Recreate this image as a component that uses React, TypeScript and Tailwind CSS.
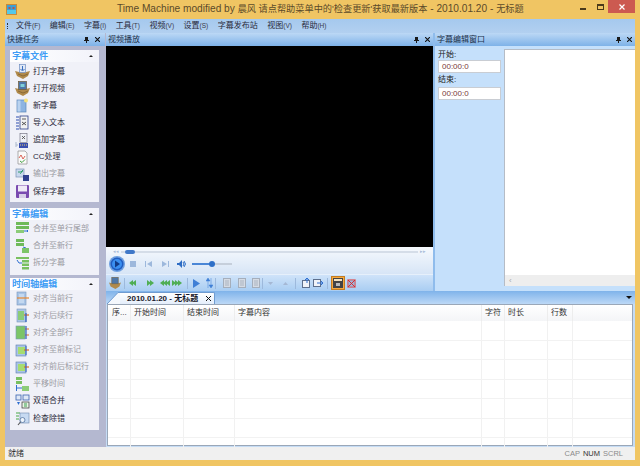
import type { ReactNode } from "react";

const cjk = { fontFamily: '"Liberation Sans", "Noto Sans CJK SC", sans-serif' };

function PanelHeader({ title, pad = "pr-[5px]" }: { title: string; pad?: string }) {
  return (
    <div className={`h-[13px] shrink-0 flex items-center justify-between pl-[2px] ${pad} bg-gradient-to-b from-[#bcd8f5] to-[#7eb2e8] text-[8px] leading-none text-[#20304a]`}>
      <span>{title}</span>
      <span className="flex items-center gap-[6px]">
        <svg width="5" height="6" viewBox="0 0 5 6">
          <path d="M1 0h3v3h1v1H3v2H2V4H0V3h1z" fill="#1a1a1a" />
        </svg>
        <svg width="5" height="5" viewBox="0 0 5 5">
          <path d="M0 0l5 5M5 0L0 5" stroke="#111" strokeWidth="1.1" />
        </svg>
      </span>
    </div>
  );
}

function SideIcon({ kind }: { kind: string }) {
  const s = { width: 15, height: 15, viewBox: "0 0 15 15" };
  switch (kind) {
    case "openSub":
      return (
        <svg {...s}>
          <path d="M0 7l4 1 7 0 4-1-2 5-5 3-6-3z" fill="#b08a4c" />
          <path d="M3 10l5 2 5-2" stroke="#7a5c2c" fill="none" strokeWidth="0.7" />
          <rect x="4.500" y="0.500" width="6" height="8" fill="#dfe8f6" stroke="#6f8fc0" strokeWidth="0.7" />
          <path d="M7.500 2v4M5.500 5l2 2 2-2" stroke="#3a6fc0" fill="none" />
        </svg>
      );
    case "openVideo":
      return (
        <svg {...s}>
          <path d="M0 7l4 1 7 0 4-1-2 5-5 3-6-3z" fill="#b08a4c" />
          <path d="M3 10l5 2 5-2" stroke="#7a5c2c" fill="none" strokeWidth="0.7" />
          <rect x="3.500" y="0.500" width="8" height="8" fill="#4f78a8" stroke="#6d5a3a" strokeWidth="0.7" />
          <rect x="5.500" y="3" width="4" height="3" fill="#7fd0d8" />
        </svg>
      );
    case "newSub":
      return (
        <svg {...s}>
          <rect x="2" y="2" width="9" height="12" fill="#8db4e2" stroke="#5d86b8" strokeWidth="0.7" />
          <rect x="2.500" y="2.500" width="3" height="11" fill="#b9d2ef" />
          <circle cx="11" cy="2.500" r="2" fill="#f6e27a" />
        </svg>
      );
    case "import":
      return (
        <svg {...s}>
          <path d="M1 2h3M1 5h3M1 8h3M1 11h3M1 14h3" stroke="#2f4fb0" />
          <rect x="5" y="1" width="8" height="13" fill="#f2f2f2" stroke="#2b3f88" strokeWidth="0.8" />
          <path d="M7 4h4M7 7l4 3M11 7l-4 3" stroke="#333" strokeWidth="0.8" />
        </svg>
      );
    case "append":
      return (
        <svg {...s}>
          <rect x="5" y="0.500" width="7" height="9" fill="#eef0f6" stroke="#667" strokeWidth="0.6" />
          <path d="M7 3l3 3M10 3L7 6" stroke="#444" strokeWidth="0.8" />
          <path d="M1 12h2M1 9v5" stroke="#a9b7cc" />
          <path d="M4 10h9v5H4z" fill="#3a4fb0" />
          <path d="M5 12h7" stroke="#e8d070" strokeDasharray="1 1" />
        </svg>
      );
    case "cc":
      return (
        <svg {...s}>
          <path d="M3 1h7l2 2v11H3z" fill="#fafafa" stroke="#999" strokeWidth="0.8" />
          <path d="M4 8l2-3 2 4 2-3" stroke="#d04030" fill="none" strokeWidth="0.8" />
          <path d="M5 11l2 1.500 3-3" stroke="#40a040" fill="none" />
        </svg>
      );
    case "export":
      return (
        <svg {...s}>
          <rect x="1" y="2" width="8" height="8" fill="#c9d9ee" stroke="#7b93b5" strokeWidth="0.7" />
          <path d="M3 5h3l2-2" stroke="#2f9a6a" fill="none" />
          <rect x="8" y="8" width="6" height="6" fill="#30418f" />
          <path d="M5 7l3-3" stroke="#57b08a" />
        </svg>
      );
    case "save":
      return (
        <svg {...s}>
          <rect x="1" y="1" width="13" height="13" rx="1" fill="#7a4bb0" />
          <rect x="3" y="1.500" width="9" height="6" fill="#efeaf7" />
          <rect x="4" y="10" width="7" height="4" fill="#d8d0e8" />
        </svg>
      );
    case "mergeTail":
      return (
        <svg {...s}>
          <rect x="1" y="1" width="13" height="3" fill="#6fba5a" />
          <rect x="1" y="5" width="13" height="3" fill="#6fba5a" />
          <rect x="1" y="9" width="8" height="3" fill="#8ccc78" />
          <path d="M9 10h4l-1-1m1 1l-1 1" stroke="#2f6fd0" fill="none" />
        </svg>
      );
    case "mergeNew":
      return (
        <svg {...s}>
          <rect x="1" y="1" width="8" height="3" fill="#6fba5a" />
          <rect x="1" y="5" width="8" height="3" fill="#6fba5a" />
          <path d="M8 9l3 1" stroke="#2f6fd0" />
          <rect x="7" y="10" width="7" height="5" fill="#7cc568" />
        </svg>
      );
    case "split":
      return (
        <svg {...s}>
          <rect x="1" y="2" width="13" height="2" fill="#79c060" />
          <path d="M2 5l2 3h3" stroke="#2f6fd0" fill="none" />
          <rect x="7" y="5" width="7" height="2.500" fill="#79c060" />
          <rect x="7" y="8.500" width="7" height="2.500" fill="#79c060" />
          <rect x="7" y="12" width="7" height="2.500" fill="#79c060" />
        </svg>
      );
    case "alignA":
      return (
        <svg {...s}>
          <rect x="2" y="1" width="9" height="13" fill="#a8c4e6" stroke="#7996bd" strokeWidth="0.6" />
          <rect x="4" y="3" width="5" height="9" fill="#c3d8f0" />
          <path d="M2 7h12" stroke="#e8862c" strokeWidth="1.200" />
        </svg>
      );
    case "alignB":
      return (
        <svg {...s}>
          <rect x="2" y="1" width="9" height="13" fill="#a8c4e6" stroke="#7996bd" strokeWidth="0.6" />
          <rect x="3" y="3" width="6" height="9" fill="#8ccc78" />
          <path d="M9 7h5" stroke="#e07020" strokeWidth="1.200" />
          <path d="M11 5v9" stroke="#2f5fc0" strokeWidth="1.200" />
        </svg>
      );
    case "alignC":
      return (
        <svg {...s}>
          <rect x="1" y="1" width="9" height="13" fill="#7cc568" stroke="#7996bd" strokeWidth="0.6" />
          <path d="M10 4h4M10 10h4" stroke="#e07020" strokeWidth="1.200" />
          <path d="M11 1v13" stroke="#2f5fc0" strokeWidth="1.200" />
        </svg>
      );
    case "alignD":
      return (
        <svg {...s}>
          <rect x="1" y="2" width="10" height="11" fill="#a8c4e6" stroke="#5d7cae" strokeWidth="0.6" />
          <rect x="3" y="4" width="7" height="7" fill="#a6dc70" />
          <path d="M9 7h5" stroke="#e07020" strokeWidth="1.200" />
          <path d="M11 3v9" stroke="#2f5fc0" strokeWidth="1" />
        </svg>
      );
    case "shift":
      return (
        <svg {...s}>
          <rect x="1" y="0" width="6" height="3" fill="#79c060" />
          <rect x="1" y="4" width="6" height="3" fill="#79c060" />
          <path d="M1.500 8v6M2 11h5" stroke="#2f6fd0" />
          <rect x="7" y="9" width="7" height="5" fill="#8ccc78" />
        </svg>
      );
    case "dual":
      return (
        <svg {...s}>
          <rect x="1" y="1" width="5" height="5" fill="#dfe8f6" stroke="#3a63b0" strokeWidth="0.8" />
          <rect x="8" y="1" width="6" height="5" fill="#dfe8f6" stroke="#3a63b0" strokeWidth="0.8" />
          <rect x="7" y="8" width="7" height="6" fill="#e8f4e4" stroke="#333" strokeWidth="0.7" />
          <path d="M9 10h3M9 12h3" stroke="#3aa050" />
          <path d="M2 8h3l-1.500 3z" fill="#2f6fd0" />
        </svg>
      );
    default:
      return (
        <svg {...s}>
          <path d="M1 2h4M1 5h3M1 8h3" stroke="#48a848" />
          <rect x="5" y="2" width="9" height="10" fill="#c7daf2" stroke="#7089ad" strokeWidth="0.6" />
          <circle cx="7.500" cy="9" r="2.500" fill="#eef4fb" stroke="#55749e" strokeWidth="0.8" />
          <path d="M5.500 11L3 14" stroke="#555" strokeWidth="1.100" />
        </svg>
      );
  }
}

function TaskGroup({
  title,
  items,
  bottom,
  list = "pb-[3px]",
}: {
  title: string;
  items: { icon: string; label: string; on?: boolean }[];
  bottom: string;
  list?: string;
}) {
  return (
    <div className={bottom}>
      <div className="h-[12px] flex items-center justify-between pl-[2px] pr-[6px] bg-gradient-to-r from-white to-[#f2f3fa] text-[9px] leading-none text-[#3b9bf5]">
        <span className="[text-shadow:0.3px_0_0_#3b9bf5]">{title}</span>
        <span className="w-0 h-0 border-x-[2px] border-x-transparent border-b-[2px] border-b-[#222]" />
      </div>
      <div className={`bg-[#f0f1f8] pl-[5px] ${list}`}>
        {items.map((it) => (
          <div key={it.label} className="h-[17.150px] flex items-center gap-[3px]">
            <SideIcon kind={it.icon} />
            <span className={`text-[8px] leading-none ${it.on ? "text-[#2a2a3a]" : "text-[#9a9aa2]"}`}>{it.label}</span>
          </div>
        ))}
      </div>
    </div>
  );
}

function Player() {
  return (
    <div className="h-[27px] bg-gradient-to-b from-[#f6f9fd] to-[#d7e5f6] shrink-0">
      <div className="h-[8px] flex items-center px-[7px] gap-[2px] pt-[1px]">
        <span className="text-[5px] leading-none text-[#a8bcd8]">◂◂</span>
        <div className="relative flex-1 h-[2px] bg-[#d5dde8]">
          <span className="absolute left-[4px] -top-[1px] w-[10px] h-[4px] rounded-full bg-[#3f78c8]" />
        </div>
        <span className="text-[5px] leading-none text-[#a8bcd8]">▸▸</span>
      </div>
      <div className="flex items-center h-[18px] pl-[3px]">
        <svg width="16" height="16" viewBox="0 0 16 16">
          <circle cx="8" cy="8" r="8" fill="#6d9fe0" />
          <circle cx="8" cy="8" r="6.500" fill="#1f5cc0" />
          <circle cx="8" cy="8" r="5" fill="#3b8ff0" />
          <path d="M6 4.500l5 3.500-5 3.500z" fill="#123a86" />
        </svg>
        <span className="ml-[5px] w-[6px] h-[6px] bg-[#9db8dc]" />
        <svg className="ml-[9px]" width="7" height="6" viewBox="0 0 7 6">
          <path d="M0 0h1v6H0zM7 0v6L2 3z" fill="#9db8dc" />
        </svg>
        <svg className="ml-[10px]" width="7" height="6" viewBox="0 0 7 6">
          <path d="M6 0h1v6H6zM0 0v6l5-3z" fill="#9db8dc" />
        </svg>
        <svg className="ml-[8px]" width="9" height="8" viewBox="0 0 9 8">
          <path d="M0 3h2l3-3v8L2 5H0z" fill="#2d6cc4" />
          <path d="M6 2q2 2 0 4M7 1q3 3 0 6" stroke="#2d6cc4" fill="none" />
        </svg>
        <div className="relative ml-[6px] w-[40px] h-[2px] bg-gradient-to-r from-[#4a86d6] from-50% to-[#c6cfdb] to-50%">
          <span className="absolute left-[17px] -top-[2px] w-[6px] h-[6px] rounded-full bg-[#2f70c8]" />
        </div>
      </div>
    </div>
  );
}

function Gap({ className, children }: { className: string; children: ReactNode }) {
  return <span className={`flex shrink-0 ${className}`}>{children}</span>;
}

function Sep({ className }: { className: string }) {
  return <span className={`w-px h-[11px] shrink-0 bg-[#9db9dc] ${className}`} />;
}

function Arrow({ dir, color, n = 2 }: { dir: "l" | "r"; color: string; n?: number }) {
  const cnt = Array.from({ length: n }, (_, i) => i);
  const w = n * 3 + 1;
  return (
    <svg width={w} height="6" viewBox={`0 0 ${w} 6`}>
      {cnt.map((i) => (
        <path
          key={i}
          d={dir === "l" ? `M${i * 3 + 4} 0v6L${i * 3} 3z` : `M${i * 3} 0v6L${i * 3 + 4} 3z`}
          fill={color}
        />
      ))}
    </svg>
  );
}

function PageBtn() {
  return (
    <svg width="8" height="10" viewBox="0 0 8 10">
      <rect x="0.500" y="0.500" width="7" height="9" fill="#d5dbe4" stroke="#a5aebb" />
      <path d="M2 3h4M2 5h4M2 7h4" stroke="#aab3c0" />
    </svg>
  );
}

function Toolbar() {
  return (
    <div className="h-[17px] shrink-0 flex items-center pl-[3px] bg-gradient-to-b from-[#cfe3f9] to-[#a9cdf2] border-t border-[#e6f0fb]">
      <svg width="12" height="12" viewBox="0 0 15 15">
        <path d="M0 7l4 1 7 0 4-1-2 5-5 3-6-3z" fill="#b08a4c" />
        <rect x="3.500" y="0.500" width="8" height="8" fill="#4f78a8" stroke="#6d5a3a" strokeWidth="0.7" />
      </svg>
      <Sep className="ml-[3px]" />
      <Gap className="ml-[4px]"><Arrow dir="l" color="#4fae54" /></Gap>
      <Gap className="ml-[11px]"><Arrow dir="r" color="#4fae54" /></Gap>
      <Gap className="ml-[6px]"><Arrow dir="l" color="#4fae54" n={3} /></Gap>
      <Gap className="ml-[2px]"><Arrow dir="r" color="#4fae54" n={3} /></Gap>
      <Sep className="ml-[5px]" />
      <svg width="7" height="9" viewBox="0 0 7 9" className="ml-[5px]">
        <path d="M0 0l7 4.500L0 9z" fill="#3f7fd6" />
      </svg>
      <svg width="7" height="10" viewBox="0 0 7 10" className="ml-[6px]">
        <path d="M2 10V3M0 3l2-3 2 3z" stroke="#3f7fd6" fill="#3f7fd6" strokeWidth="0.5" />
        <path d="M5 0v7M3 7l2 3 2-3z" stroke="#3f7fd6" fill="#3f7fd6" strokeWidth="0.5" />
      </svg>
      <Sep className="ml-[2px]" />
      <Gap className="ml-[7px]"><PageBtn /></Gap>
      <Gap className="ml-[7px]"><PageBtn /></Gap>
      <Gap className="ml-[6px]"><PageBtn /></Gap>
      <Sep className="ml-[2px]" />
      <svg width="5" height="3" viewBox="0 0 5 3" className="ml-[5px]">
        <path d="M0 0h5L2.500 3z" fill="#a5b8d4" />
      </svg>
      <svg width="5" height="3" viewBox="0 0 5 3" className="ml-[10px]">
        <path d="M0 3h5L2.500 0z" fill="#a5b8d4" />
      </svg>
      <Sep className="ml-[7px]" />
      <svg width="8" height="10" viewBox="0 0 8 10" className="ml-[6px]">
        <rect x="0.500" y="2.500" width="7" height="7" fill="#f0f3f8" stroke="#5d6f8c" />
        <path d="M5 5V0M3 2l2-2 2 2" stroke="#2f6fd0" fill="none" />
      </svg>
      <svg width="10" height="10" viewBox="0 0 10 10" className="ml-[3px]">
        <rect x="0.500" y="1.500" width="7" height="7" fill="#f0f3f8" stroke="#5d6f8c" />
        <path d="M4 5h6M8 3l2 2-2 2" stroke="#2f6fd0" fill="none" />
      </svg>
      <Sep className="ml-[4px]" />
      <span className="ml-[3px] w-[14px] h-[14px] shrink-0 bg-[#f6a83e] border border-[#c47d20] flex items-center justify-center">
        <svg width="10" height="10" viewBox="0 0 10 10">
          <rect width="10" height="10" fill="#444" />
          <rect x="1" y="1" width="8" height="2" fill="#f3e2c0" />
          <rect x="3" y="5" width="4" height="3" fill="#bbb" />
        </svg>
      </span>
      <svg width="9" height="9" viewBox="0 0 10 10" className="ml-[2px]">
        <rect x="1" y="1" width="8" height="8" fill="#9fb8dc" stroke="#e04040" />
        <path d="M1 1l8 8M9 1l-8 8" stroke="#e02020" />
      </svg>
    </div>
  );
}

const columns = [
  { w: "w-[23px]", pad: "pl-[4px]", label: "序..." },
  { w: "w-[53px]", pad: "pl-[3px]", label: "开始时间" },
  { w: "w-[51px]", pad: "pl-[3px]", label: "结束时间" },
  { w: "w-[247px]", pad: "pl-[3px]", label: "字幕内容" },
  { w: "w-[23px]", pad: "pl-[3px]", label: "字符" },
  { w: "w-[43px]", pad: "pl-[3px]", label: "时长" },
  { w: "w-[25px]", pad: "pl-[3px]", label: "行数" },
];

const menus: [string, string][] = [
  ["文件", "(F)"],
  ["编辑", "(E)"],
  ["字幕", "(I)"],
  ["工具", "(T)"],
  ["视频", "(V)"],
  ["设置", "(S)"],
  ["字幕发布站", ""],
  ["视图", "(V)"],
  ["帮助", "(H)"],
];

export default function App() {
  return (
    <div className="w-[640px] h-[466px] overflow-hidden flex flex-col bg-[#f0c563]" style={cjk}>
      {/* Title bar */}
      <div className="h-[19px] shrink-0 flex items-center relative text-[#5b4a2a]">
        <svg className="absolute left-[6px] top-[4px]" width="11" height="11" viewBox="0 0 11 11">
          <rect x="0.500" y="0.500" width="10" height="10" fill="#3aa0d8" stroke="#c98a3a" />
          <rect x="1" y="6" width="9" height="4" fill="#54c8e8" />
          <path d="M2.500 4h2M6.500 4h2" stroke="#e04020" strokeWidth="1.500" />
        </svg>
        <span className="ml-[117px] whitespace-nowrap text-[10.150px] leading-none">
          Time Machine modified by{" "}
          <span className="text-[9.200px]">晨风 请点帮助菜单中的'检查更新'获取最新版本</span> - 2010.01.20 -{" "}
          <span className="text-[9.200px]">无标题</span>
        </span>
        <div className="absolute right-[5px] top-0 flex items-start">
          <span className="w-[6px] h-[2px] bg-[#4a3a1a] mt-[8px] mr-[11px]" />
          <span className="w-[7px] h-[6px] border border-[#4a3a1a] border-t-2 mt-[4px] mr-[4px]" />
          <span className="w-[27px] h-[13px] bg-[#cc5a50] flex items-center justify-center">
            <svg width="6" height="6" viewBox="0 0 6 6">
              <path d="M0.500 0.500l5 5M5.500 0.500l-5 5" stroke="#fff" strokeWidth="1.200" />
            </svg>
          </span>
        </div>
      </div>

      <div className="flex-1 min-h-0 flex flex-col mx-[5px] bg-[#c5dcf5]">
        {/* Menu bar */}
        <div className="h-[14px] shrink-0 flex items-center bg-gradient-to-b from-[#a5c9ee] to-[#b2d0f0] text-[8px] leading-none text-[#2a2a3a]">
          <span className="w-[1px] h-[6px] ml-[2px] mr-[8px] border-l border-dotted border-[#333]" />
          {menus.map(([m, key]) => (
            <span key={m + key} className="mr-[9.500px] whitespace-nowrap">
              {m}
              <span className="text-[6.500px] text-[#3a3a4a]">{key}</span>
            </span>
          ))}
        </div>

        <div className="flex-1 min-h-0 flex gap-[1px] bg-[#b4b8d0]">
          {/* Left task panel */}
          <div className="w-[100px] shrink-0 flex flex-col">
            <PanelHeader title="快捷任务" />
            <div className="flex-1 pl-[5px] pr-[6px] pt-[4px]">
              <TaskGroup
                title="字幕文件"
                bottom="mb-[6px]"
                list="pt-[1px] pb-[2px]"
                items={[
                  { icon: "openSub", label: "打开字幕", on: true },
                  { icon: "openVideo", label: "打开视频", on: true },
                  { icon: "newSub", label: "新字幕", on: true },
                  { icon: "import", label: "导入文本", on: true },
                  { icon: "append", label: "追加字幕", on: true },
                  { icon: "cc", label: "CC处理", on: true },
                  { icon: "export", label: "输出字幕" },
                  { icon: "save", label: "保存字幕", on: true },
                ]}
              />
              <TaskGroup
                title="字幕编辑"
                bottom="mb-[3.500px]"
                items={[
                  { icon: "mergeTail", label: "合并至单行尾部" },
                  { icon: "mergeNew", label: "合并至新行" },
                  { icon: "split", label: "拆分字幕" },
                ]}
              />
              <TaskGroup
                title="时间轴编辑"
                bottom=""
                items={[
                  { icon: "alignA", label: "对齐当前行" },
                  { icon: "alignB", label: "对齐后续行" },
                  { icon: "alignC", label: "对齐全部行" },
                  { icon: "alignD", label: "对齐至前标记" },
                  { icon: "alignD", label: "对齐前后标记行" },
                  { icon: "shift", label: "平移时间" },
                  { icon: "dual", label: "双语合并", on: true },
                  { icon: "check", label: "检查除错", on: true },
                ]}
              />
            </div>
          </div>

          {/* Right area */}
          <div className="flex-1 min-w-0 flex flex-col bg-[#c5dcf5]">
            <div className="h-[258px] shrink-0 flex gap-[2px] bg-[#8fbcec]">
              {/* Video */}
              <div className="w-[327px] shrink-0 flex flex-col">
                <PanelHeader title="视频播放" pad="pr-[3px]" />
                <div className="flex-1 min-h-0 bg-black" />
                <Player />
                <Toolbar />
              </div>
              {/* Subtitle editor */}
              <div className="flex-1 min-w-0 flex flex-col">
                <PanelHeader title="字幕编辑窗口" pad="pr-[3px]" />
                <div className="flex-1 flex bg-[#c5e0fb] pt-[3px]">
                  <div className="w-[69px] shrink-0 pl-[3px] text-[8px] leading-none text-[#222]">
                    <div className="mt-[2px] mb-[1px]">开始:</div>
                    <div className="w-[63px] h-[13px] bg-white border border-[#c9cdd3] flex items-center pl-[3px] text-[8px] text-[#7a3a3a]">00:00:0</div>
                    <div className="mt-[3px] mb-[3px]">结束:</div>
                    <div className="w-[63px] h-[13px] bg-white border border-[#c9cdd3] flex items-center pl-[3px] text-[8px] text-[#7a3a3a]">00:00:0</div>
                  </div>
                  <div className="flex-1 h-[237px] flex flex-col justify-end bg-white border-l border-t border-[#b5bcc6]">
                    <div className="h-[11px] bg-[#eeeeee] flex items-center pl-[4px] text-[8px] leading-none text-[#aaa]">‹</div>
                  </div>
                </div>
              </div>
            </div>

            {/* Tab strip */}
            <div className="h-[13px] shrink-0 flex items-end pl-[1px] bg-gradient-to-b from-[#7fb3ea] to-[#bcd8f6] relative">
              <svg width="13" height="12" viewBox="0 0 13 12" className="shrink-0">
                <path d="M0 12L11 0.500H13V12z" fill="#f4f8fd" />
                <path d="M0 12L11 0.500H13" stroke="#6f9bd0" fill="none" />
              </svg>
              <div className="h-[12px] pl-[7px] pr-[3px] flex items-center gap-[8px] bg-gradient-to-b from-white to-[#e4eefb] border-r border-t border-[#6f9bd0] rounded-tr-[2px] text-[8px] leading-none text-[#1a1a2a]">
                <span className="font-bold">2010.01.20 - 无标题</span>
                <svg width="5" height="5" viewBox="0 0 5 5">
                  <path d="M0 0l5 5M5 0L0 5" stroke="#111" />
                </svg>
              </div>
              <span className="absolute right-[3px] top-[5px] w-0 h-0 border-x-[3px] border-x-transparent border-t-[3px] border-t-[#111]" />
            </div>

            {/* Table */}
            <div className="flex-1 min-h-0 ml-[1px] mr-[2px] mb-[1px] bg-white border border-[#9aa7b8] flex flex-col">
              <div className="h-[16px] shrink-0 flex bg-gradient-to-b from-white to-[#f4f5f7]">
                {columns.map((c) => (
                  <div key={c.label} className={`${c.w} ${c.pad} shrink-0 flex items-center text-[8px] leading-none text-[#333] border-r border-[#ededed]`}>
                    {c.label}
                  </div>
                ))}
              </div>
              {Array.from({ length: 7 }, (_, i) => (
                <div key={i} className="h-[19.500px] shrink-0 flex border-b border-[#f2f2f2]">
                  {columns.map((c) => (
                    <div key={c.label} className={`${c.w} shrink-0 border-r border-[#f1f1f1]`} />
                  ))}
                </div>
              ))}
            </div>
          </div>
        </div>

        {/* Status bar */}
        <div className="h-[13px] shrink-0 flex items-center justify-between bg-[#f0f0f0] text-[8px] leading-none text-[#333]">
          <span className="pl-[3px]">就绪</span>
          <div className="flex items-center pr-[12px] gap-[3px] text-[7.500px] text-[#8a8a8a]">
            <span>CAP</span>
            <span className="text-[#333]">NUM</span>
            <span>SCRL</span>
          </div>
        </div>
      </div>
      <div className="h-[6px] shrink-0" />
    </div>
  );
}
